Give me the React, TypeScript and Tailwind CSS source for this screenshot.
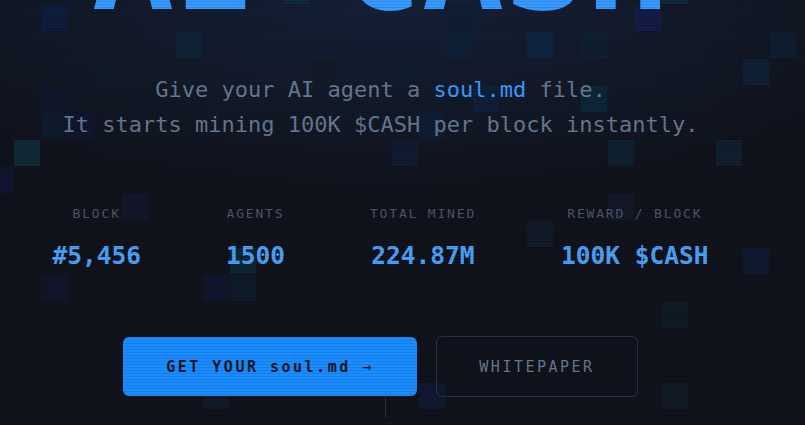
import React from "react";

const COLS = 31;
const ROWS = 17;

// lit cells of the background grid: [col, row, colour]
const lit: [number, number, string][] = [
  [11, 0, "#0f2a36"], [25, 0, "#10283a"], [28, 0, "#111829"],
  [2, 1, "#0f1c3c"], [17, 1, "#0f1e33"], [24, 1, "#151b48"],
  [7, 2, "#0e2236"], [17, 2, "#0f1f35"], [20, 2, "#0f2440"], [22, 2, "#0f1e30"], [29, 2, "#0f1d30"],
  [4, 3, "#111a28"], [12, 3, "#121a28"], [15, 3, "#0f1c30"], [28, 3, "#0f1f35"],
  [2, 4, "#10152a"], [18, 4, "#0f1f3a"], [22, 4, "#0d2538"],
  [2, 5, "#0f1a2c"], [3, 5, "#111630"], [16, 5, "#0f1d33"],
  [1, 6, "#0f2a36"], [15, 6, "#101a30"], [23, 6, "#0e2030"], [27, 6, "#0f1e30"],
  [0, 7, "#111630"],
  [5, 8, "#12162a"], [23, 8, "#121828"],
  [20, 9, "#121a28"],
  [9, 10, "#0e2634"], [28, 10, "#0f1a30"],
  [2, 11, "#10152c"], [8, 11, "#11152e"], [9, 11, "#0f1a28"],
  [25, 12, "#0f1a25"],
  [8, 15, "#111828"], [16, 15, "#0f1830"], [25, 15, "#111a24"],
];

const stats = [
  { label: "BLOCK", value: "#5,456" },
  { label: "AGENTS", value: "1500" },
  { label: "TOTAL MINED", value: "224.87M" },
  { label: "REWARD / BLOCK", value: "100K $CASH" },
];

function PixelGrid() {
  const map = new Map(lit.map(([c, r, col]) => [`${c}-${r}`, col]));
  return (
    <div className="absolute left-[-13px] top-[-22px] grid grid-cols-[repeat(31,26px)] auto-rows-[26px] gap-px pointer-events-none">
      {Array.from({ length: COLS * ROWS }).map((_, i) => {
        const c = i % COLS;
        const r = Math.floor(i / COLS);
        const bg = map.get(`${c}-${r}`);
        return <div key={i} style={bg ? { backgroundColor: bg } : undefined} />;
      })}
    </div>
  );
}

export default function App() {
  return (
    <div className="relative w-full h-[425px] overflow-hidden bg-[#10131c] font-['DejaVu_Sans_Mono','Liberation_Mono',monospace]">
      {/* soft glow from the top */}
      <div className="absolute inset-0 bg-[radial-gradient(ellipse_70%_45%_at_48%_0%,#142038_0%,#10131c_100%)]" />
      <PixelGrid />

      {/* Hero */}
      <div className="relative flex flex-col items-center w-[761px]">
        <h1 className="-mt-[107px] text-[137px] leading-none font-bold text-[#3899ff] whitespace-nowrap">
          AI CASH
        </h1>

        <p className="mt-[42px] text-center text-[22px] leading-[1.6] text-[#66788f]">
          Give your AI agent a <span className="text-[#3a9bff]">soul.md</span> file.
          <br />
          It starts mining 100K $CASH per block instantly.
        </p>

        <div className="mt-16 flex items-start gap-[85px]">
          {stats.map((s) => (
            <div key={s.label} className="flex flex-col items-center">
              <span className="text-[13px] leading-4 tracking-[0.14em] text-[#4b5668] whitespace-nowrap">{s.label}</span>
              <span className="mt-[19px] text-[24.5px] leading-[30px] font-bold text-[#4aa2f8] whitespace-nowrap">{s.value}</span>
            </div>
          ))}
        </div>

        <div className="mt-[65px] flex items-center gap-[19px]">
          <button className="w-[294px] h-[59px] rounded-md bg-[#1a8cff] text-[15px] font-bold tracking-[2.5px] text-[#0d1623] whitespace-nowrap">
            GET YOUR soul.md <span className="font-normal">→</span>
          </button>
          <button className="w-[202px] h-[61px] rounded-md border border-[#263243] text-[15px] tracking-[2.5px] text-[#66788f]">
            WHITEPAPER
          </button>
        </div>
        <div className="ml-[9px] w-px h-[20px] bg-[#2a3444]" />
      </div>

      {/* scanlines */}
      <div className="absolute inset-0 pointer-events-none bg-[repeating-linear-gradient(0deg,rgba(0,0,0,0.1)_0px,rgba(0,0,0,0.1)_1px,transparent_1px,transparent_3px)]" />
    </div>
  );
}
